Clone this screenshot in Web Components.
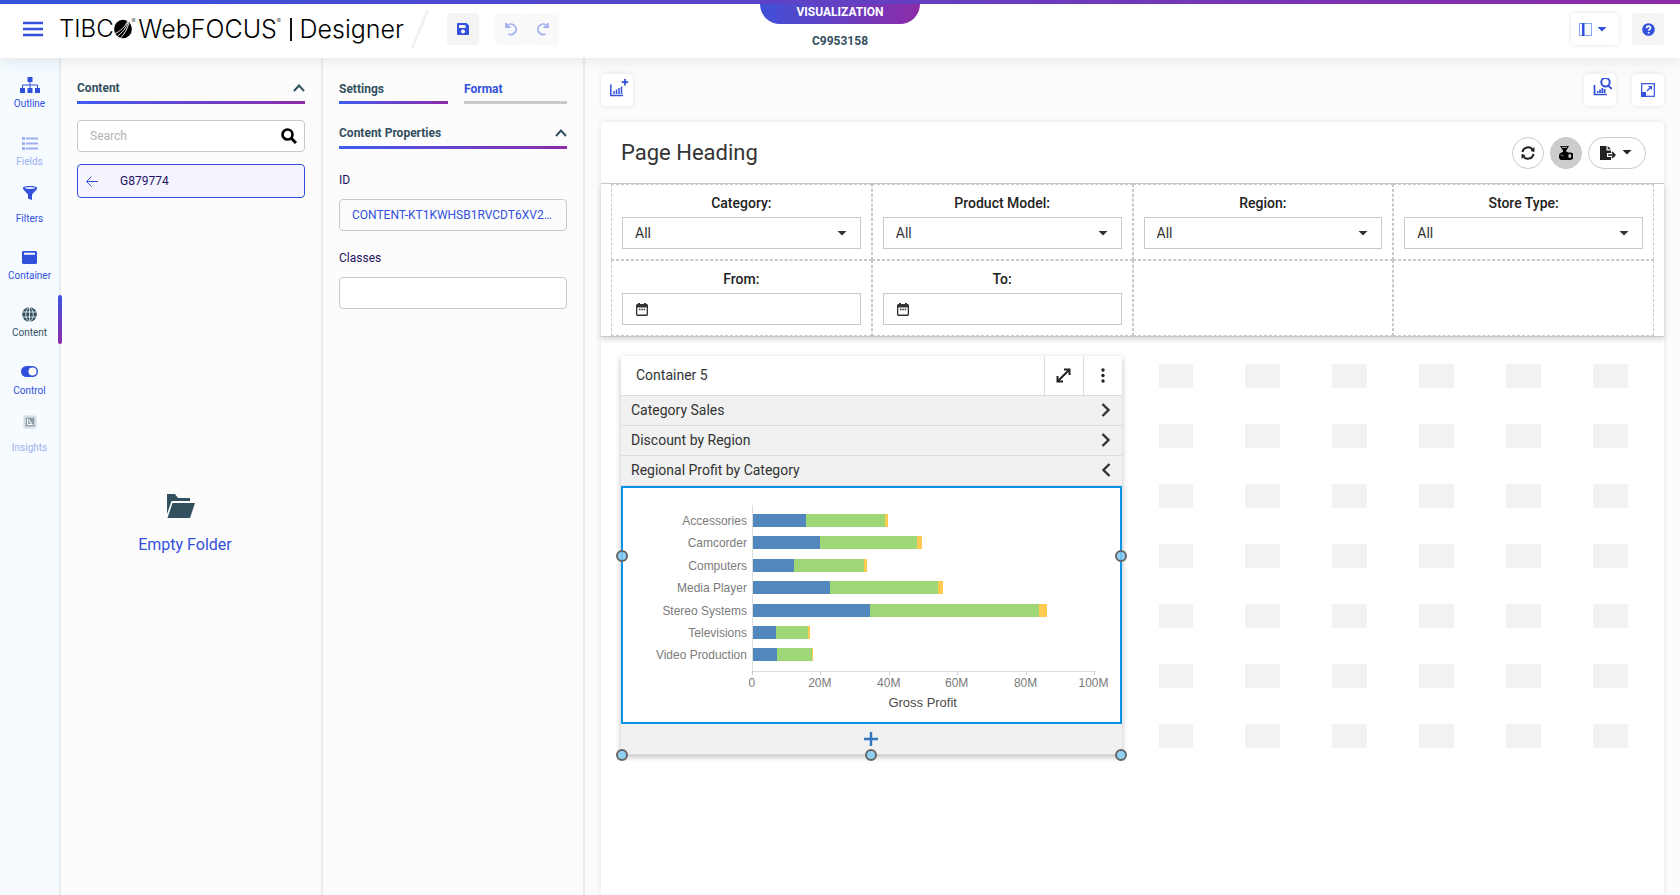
<!DOCTYPE html>
<html lang="en">
<head>
<meta charset="utf-8">
<title>WebFOCUS Designer</title>
<style>
html, body { margin: 0; height: 100%; }
body { font-family: Roboto, "Liberation Sans", sans-serif; font-size: 12px; background: #fcfcfc; color: #333; }
</style>
</head>
<body>
<designer-app></designer-app>

<script>
const BASE = `
  *, *::before, *::after { box-sizing: border-box; }
  button, input, select { font: inherit; color: inherit; margin: 0; }
  button { border: 0; background: none; padding: 0; display: flex; align-items: center; justify-content: center; cursor: pointer; }
  :host { display: block; box-sizing: border-box; }
`;

function define(name, css, html) {
  customElements.define(name, class extends HTMLElement {
    constructor() {
      super();
      this.attachShadow({ mode: 'open' });
    }
    connectedCallback() {
      if (this.shadowRoot.childNodes.length) return;
      const template = document.createElement('template');
      template.innerHTML = `<style>${BASE}${css}</style>${typeof html === 'function' ? html(this) : html}`;
      this.shadowRoot.append(template.content.cloneNode(true));
    }
  });
}

/* ---------- icons ---------- */
const ICONS = {
  menu: [20, 16, '<path d="M0 .7h20v2.600H0zM0 6.700h20v2.600H0zM0 12.700h20v2.600H0z" fill="currentColor"/>'],
  save: [12, 12, '<path fill="currentColor" fill-rule="evenodd" d="M1 0h8.500L12 2.500V11a1 1 0 0 1-1 1H1a1 1 0 0 1-1-1V1a1 1 0 0 1 1-1zM2 2v3h6.500V2zM6 6.500a2 2 0 1 0 .01 0z"/>'],
  undo: [14, 14, '<path d="M2 1V5H6.500M2.300 4.800A5.200 5.200 0 1 1 4.500 12" fill="none" stroke="currentColor" stroke-width="1.800"/>'],
  redo: [14, 14, '<path d="M12 1V5H7.500M11.700 4.800A5.200 5.200 0 1 0 9.500 12" fill="none" stroke="currentColor" stroke-width="1.800"/>'],
  layout: [13, 13, '<rect x=".5" y=".5" width="12" height="12" fill="#f3f8ff" stroke="#8aa8f0"/><path d="M3 0h2.500v13H3z" fill="#3250dc"/>'],
  caret: [10, 5, '<path d="M.5 0h9L5 4.500z" fill="currentColor"/>'],
  help: [13, 13, '<circle cx="6.500" cy="6.500" r="6.300" fill="currentColor"/><path d="M4.500 5.200c0-2.800 4-2.600 4-.3 0 1.400-1.900 1.400-1.900 2.900M6.600 9v1.600" stroke="#fff" stroke-width="1.600" fill="none"/>'],
  outline: [20, 16, '<path fill="currentColor" d="M7.500 0h5v5h-5zM0 11h5v5H0zM7.500 11h5v5h-5zM15 11h5v5h-5z"/><path d="M10 5v6M2.500 11V8h15v3" fill="none" stroke="currentColor"/>'],
  fields: [16, 14, '<path fill="currentColor" d="M0 1h3v3H0zM0 6h3v3H0zM0 11h3v3H0zM4 1.500h12v2H4zM4 6.500h12v2H4zM4 11.500h12v2H4z"/>'],
  filter: [14, 14, '<path fill="currentColor" d="M0 2c0-2.600 14-2.600 14 0v1L9 8.500V14L5 12.500V8.500L0 3z"/><ellipse cx="7" cy="2" rx="5" ry=".9" fill="#dfe9fd"/>'],
  container: [15, 13, '<path fill="currentColor" fill-rule="evenodd" d="M1 0h13l1 1v11l-1 1H1l-1-1V1zM2 1.800v2h11v-2z"/>'],
  globe: [15, 15, '<circle cx="7.500" cy="7.500" r="7.300" fill="currentColor"/><path d="M0 5h15M0 10h15M7.500 0v15M7.500 0C2.500 3 2.500 12 7.500 15M7.500 0C12.500 3 12.500 12 7.500 15" stroke="#f5fbff" stroke-width=".8" fill="none"/>'],
  toggle: [17, 11, '<rect width="17" height="11" rx="5.500" fill="currentColor"/><circle cx="11.500" cy="5.500" r="4" fill="#fff"/>'],
  insights: [14, 14, '<rect x="1" y="1" width="12" height="12" rx="2" fill="#c4d0d6" stroke="#dbe4e9" stroke-width="2" stroke-dasharray="1.500 .7"/><rect x="3" y="3" width="8" height="8" fill="#8b9ea7"/><path d="M4.500 4v5.500H10M5 4.500l2 1.500v2h2" stroke="#fff" fill="none"/>'],
  up: [12, 8, '<path d="M1 7l5-5.500L11 7" fill="none" stroke="currentColor" stroke-width="2"/>'],
  search: [16, 16, '<circle cx="6.500" cy="6.500" r="5" fill="none" stroke="currentColor" stroke-width="2.600"/><path d="M10 10l5 5" stroke="currentColor" stroke-width="3"/>'],
  back: [12, 11, '<path d="M12 5.500H1M5.500.5l-5 5 5 5" fill="none" stroke="currentColor"/>'],
  folder: [28, 24, '<path fill="currentColor" d="M0 0h8l3 4h12v3H4.500L0 20zM5.500 9H28l-5 15H.5z"/>'],
  chartAdd: [24, 24, '<path d="M5.800 6.500v11H18M9 16v-3M11.500 16v-4.500M14 16v-6M16.500 16V8.500" fill="none" stroke="currentColor" stroke-width="1.500"/><path d="M20 1v6.500M16.700 4.200h6.500" stroke="currentColor" stroke-width="1.800"/>'],
  chartFind: [24, 24, '<path d="M6.500 7v9.500H19M9.700 15v-2M12 15v-3.500M14.300 15v-5M16.600 15v-4M20 7.500l4 3.500" fill="none" stroke="currentColor" stroke-width="1.700"/><circle cx="17.500" cy="4.300" r="4.200" fill="#fff" stroke="currentColor" stroke-width="2"/>'],
  expand: [14, 14, '<rect x=".7" y=".7" width="12.600" height="12.600" fill="none" stroke="currentColor" stroke-width="1.200"/><path d="M0 9h5v5H0zM7 3h4v4z" fill="currentColor"/><path d="M10 4L6 8" stroke="currentColor" stroke-width="1.500"/>'],
  refresh: [14, 14, '<path d="M1.500 6A5.600 5.600 0 0 1 11.800 4M12.500 8A5.600 5.600 0 0 1 2.200 10" fill="none" stroke="currentColor" stroke-width="2"/><path d="M13.500 1v5L9.500 5zM.5 13V8l4 1z" fill="currentColor"/>'],
  flask: [14, 14, '<path d="M1 0h9L7.300 4.500v2H4V4.500z" fill="currentColor"/><path d="M3 1.300h5" stroke="#ccc" stroke-width=".9"/><path d="M.8 7.500l3-1.700h4l1.200.7h2a3.700 3.700 0 0 1 0 7.500H2.500C-.3 14-.7 9.500.8 7.500z" fill="currentColor"/><ellipse cx="10.800" cy="10" rx="1.500" ry="1.900" fill="#ccc"/><path d="M1.500 8.800l3 1" stroke="#ccc" stroke-width=".6"/>'],
  exportFile: [16, 14, '<path d="M0 0h6.500v4.500H11V7H7v4h4v3H0z" fill="currentColor"/><path d="M7.700 0L11 3.300H7.700z" fill="currentColor"/><path d="M8 9h6M12 6.200l2.800 2.800L12 11.800" fill="none" stroke="currentColor" stroke-width="1.700"/>'],
  calendar: [12, 13, '<path fill="currentColor" fill-rule="evenodd" d="M1 1h1V0h2v1h4V0h2v1h1l1 1v10l-1 1H1l-1-1V2zM1.300 4.500v7h9.400v-7z"/><path d="M3 6.500h1.500M5.300 6.500h1.500M7.600 6.500h1.500" stroke="currentColor" stroke-width="1.300"/>'],
  resize: [15, 15, '<path d="M3 12l9-9" stroke="currentColor" stroke-width="2"/><path d="M8 .5h6.500V7h-2V4l-1.500-1.500H8zM.5 8v6.500H7v-2H4L2.500 11V8z" fill="currentColor"/>'],
  dots: [4, 15, '<circle cx="2" cy="2" r="1.700" fill="currentColor"/><circle cx="2" cy="7.500" r="1.700" fill="currentColor"/><circle cx="2" cy="13" r="1.700" fill="currentColor"/>'],
  right: [10, 14, '<path d="M1.500 1l6 6-6 6" fill="none" stroke="currentColor" stroke-width="2.400"/>'],
  left: [10, 14, '<path d="M8.500 1l-6 6 6 6" fill="none" stroke="currentColor" stroke-width="2.400"/>'],
  plus: [14, 14, '<path d="M7 0v14M0 7h14" stroke="currentColor" stroke-width="2.400"/>'],
  ball: [18, 20, '<ellipse cx="9" cy="10" rx="8.900" ry="9.200" fill="#000"/><path d="M1 14.500C6 12.500 11 8 13.500 2M3.500 17C8 14 12.500 9 14.300 2.500M6.500 19C10.500 15 13.500 10 15 3.500" stroke="#fff" stroke-width=".9" fill="none"/>']
};
define('ui-icon', ':host{display:inline-flex;flex:none} svg{display:block}', el => {
  const [w, h, body] = ICONS[el.getAttribute('name')];
  return `<svg width="${w}" height="${h}" viewBox="0 0 ${w} ${h}" aria-hidden="true">${body}</svg>`;
});

/* ---------- header ---------- */
define('icon-button', `
  :host { flex: none; }
  button { width: 32px; height: 32px; border-radius: 4px; color: #3250dc; background: #f4f4f4; }
  :host([kind="raised"]) button { background: #fff; box-shadow: 0 0 5px rgba(0,0,0,.1); }
  :host([kind="faded"]) button { background: #f9f9f9; color: #a3b1f1; }
  :host([wide]) button { width: 48px; gap: 5px; padding-right: 4px; }
`, el => `<button type="button" aria-label="${el.getAttribute('label')}"><slot></slot></button>`);

define('product-logo', `
  :host { font: 300 24px/32px Inter, "Open Sans", sans-serif; color: #000; width: 345px; flex: none; }
  h1 { font: inherit; margin: 0; display: flex; align-items: center; white-space: nowrap; height: 30px; }
  sup { font-size: 6px; line-height: 8px; align-self: flex-start; margin-top: 3px; width: 7px; }
  .name { font-size: 25px; }
  .bar { width: 2px; height: 23px; background: #111; margin: 0 8px 0 6px; }
`, `<h1><span>TIBC</span><ui-icon name="ball"></ui-icon><sup>®</sup><span class="name">WebFOCUS</span><sup>®</sup><span class="bar"></span><span class="name">Designer</span></h1>`);

define('app-header', `
  :host { position: relative; z-index: 2; background: #fff; height: 58px; box-shadow: 0 0 16px rgba(50,80,100,.16); flex: none; }
  .strip { height: 4px; background: linear-gradient(90deg, #3355de, #8e2ba8); }
  .row { display: grid; grid-template-columns: 1fr auto 1fr; align-items: start; }
  .left, .right { display: flex; align-items: center; padding-top: 9px; }
  .left { padding-left: 23px; height: 41px; }
  .menu { color: #3250dc; margin-right: 16px; }
  .slash { margin: 0 18px 0 7px; display: block; flex: none; }
  .history { display: flex; margin-left: 16px; }
  .center { display: flex; flex-direction: column; align-items: center; }
  .pill { width: 160px; height: 20px; border-radius: 0 0 24px 24px; background: linear-gradient(100deg, #3f51d8, #8e2ba8); color: #fff; font-weight: 700; line-height: 16px; text-align: center; }
  .id { font-weight: 700; color: #33505f; line-height: 16px; margin-top: 9px; }
  .right { justify-content: flex-end; gap: 13px; padding-right: 16px; }
`, `
  <div class="strip"></div>
  <div class="row">
    <div class="left">
      <button class="menu" aria-label="Menu"><ui-icon name="menu"></ui-icon></button>
      <product-logo></product-logo>
      <svg class="slash" width="18" height="38" viewBox="0 0 18 38"><path d="M17 0L1 38" stroke="#f0f0f0" stroke-width="2.500"/></svg>
      <icon-button label="Save"><ui-icon name="save"></ui-icon></icon-button>
      <div class="history">
        <icon-button kind="faded" label="Undo"><ui-icon name="undo"></ui-icon></icon-button>
        <icon-button kind="faded" label="Redo"><ui-icon name="redo"></ui-icon></icon-button>
      </div>
    </div>
    <div class="center"><div class="pill">VISUALIZATION</div><div class="id">C9953158</div></div>
    <div class="right">
      <icon-button kind="raised" wide label="Layout"><ui-icon name="layout"></ui-icon><ui-icon name="caret"></ui-icon></icon-button>
      <icon-button label="Help"><ui-icon name="help"></ui-icon></icon-button>
    </div>
  </div>`);

/* ---------- sidebar ---------- */
define('nav-item', `
  :host { position: relative; }
  button { width: 100%; height: 100%; flex-direction: column; justify-content: flex-end; gap: 4px; padding-bottom: 8px; font-size: 10px; line-height: 14px; color: #3250dc; }
  .icon { height: 16px; display: flex; align-items: center; }
  :host([tall]) button { gap: 11px; }
  :host([off]) button { color: #9fb0f0; }
  :host([active]) button { color: #33505f; }
  :host([active])::after { content: ""; position: absolute; top: 4px; bottom: 4px; right: -3px; width: 4px; border-radius: 2px; background: linear-gradient(#3f55dc, #8e2ba8); }
`, el => `<button type="button"><span class="icon"><ui-icon name="${el.getAttribute('icon')}"></ui-icon></span><slot></slot></button>`);

define('side-nav', `
  :host { width: 61px; flex: none; background: #f5fbff; border-right: 2px solid #ebebeb; padding-top: 4px; }
  nav { display: grid; grid-template-rows: repeat(7, 1fr); height: 401px; }
`, `<nav>
  <nav-item icon="outline">Outline</nav-item>
  <nav-item icon="fields" off>Fields</nav-item>
  <nav-item icon="filter" tall>Filters</nav-item>
  <nav-item icon="container">Container</nav-item>
  <nav-item icon="globe" active>Content</nav-item>
  <nav-item icon="toggle">Control</nav-item>
  <nav-item icon="insights" tall off>Insights</nav-item>
</nav>`);

/* ---------- panels ---------- */
define('panel-title', `
  :host { color: #33505f; font-weight: 700; }
  button { width: 100%; justify-content: space-between; font-weight: 700; line-height: 16px; height: 24px; padding-bottom: 4px; border-bottom: 3px solid; border-image: linear-gradient(90deg, #3f5cf0, #8e2ba8) 1; }
  :host([fold]) button { padding-bottom: 6px; }
  :host([plain]) button { color: #3250dc; border-image: none; border-color: #c9c9c9; }
`, el => `<button type="button"><slot></slot>${el.hasAttribute('fold') ? '<ui-icon name="up"></ui-icon>' : ''}</button>`);

define('content-panel', `
  :host { width: 262px; flex: none; border-right: 2px solid #ebebeb; padding: 22px 16px 0; display: flex; flex-direction: column; }
  .search { display: flex; align-items: center; height: 32px; margin-top: 16px; padding: 0 7px 0 12px; border: 1px solid #c9c9c9; border-radius: 4px; background: #fff; color: #000; }
  .search input { flex: 1; min-width: 0; border: 0; outline: 0; background: none; padding: 0; }
  input::placeholder { color: #b3b3b3; opacity: 1; }
  .crumb { width: 100%; height: 34px; margin-top: 12px; padding: 0 8px; gap: 22px; justify-content: flex-start; background: #f4f3fe; border: 1px solid #3250dc; border-radius: 4px; color: #3250dc; }
  .crumb span { color: #24125f; }
  .empty { display: flex; flex-direction: column; align-items: center; margin: 296px 12px 0 0; color: #33505f; gap: 16px; }
  .empty ui-icon { margin-right: 8px; }
  p { margin: 0; font-size: 16px; line-height: 22px; color: #3250dc; }
`, `
  <panel-title fold>Content</panel-title>
  <label class="search"><input type="text" placeholder="Search" aria-label="Search"><ui-icon name="search"></ui-icon></label>
  <button class="crumb" type="button"><ui-icon name="back"></ui-icon><span>G879774</span></button>
  <div class="empty"><ui-icon name="folder"></ui-icon><p>Empty Folder</p></div>`);

define('text-field', `
  label { display: block; color: #24125f; line-height: 16px; }
  input { display: block; width: 100%; height: 32px; margin-top: 11px; padding: 0 12px; border: 1px solid #c9c9c9; border-radius: 4px; background: #fff; color: #3250dc; text-overflow: ellipsis; outline: 0; }
  input:read-only { background: #fcfcfc; }
`, el => `<label>${el.getAttribute('label')}<input type="text" value="${el.getAttribute('value') || ''}" ${el.hasAttribute('locked') ? 'readonly' : ''}></label>`);

define('settings-panel', `
  :host { width: 262px; flex: none; border-right: 2px solid #ebebeb; padding: 22px 16px 0; }
  .tabs { display: grid; grid-template-columns: 1fr 103px; gap: 16px; margin-bottom: 21px; }
  text-field { margin-top: 23px; }
  text-field + text-field { margin-top: 19px; }
`, `
  <div class="tabs"><panel-title>Settings</panel-title><panel-title plain>Format</panel-title></div>
  <panel-title fold>Content Properties</panel-title>
  <text-field label="ID" value="CONTENT-KT1KWHSB1RVCDT6XV2P4" locked></text-field>
  <text-field label="Classes"></text-field>`);

/* ---------- page filters ---------- */
define('filter-cell', `
  :host { border: 1px dashed #c9c9c9; height: 76px; padding: 9px 10px 0; }
  label { display: block; text-align: center; font-size: 14px; line-height: 18px; font-weight: 500; color: #222; }
  .box { position: relative; display: flex; align-items: center; height: 32px; margin-top: 5px; border: 1px solid #c9c9c9; background: #fff; }
  select, input { appearance: none; width: 100%; height: 100%; border: 0; border-radius: 0; background: none; padding: 0 12px; font-size: 14px; outline: 0; color: #333; }
  .box > ui-icon { position: absolute; pointer-events: none; }
  .box > ui-icon[name="caret"] { right: 13px; }
  .box > ui-icon[name="calendar"] { left: 13px; }
  input { padding-left: 34px; }
`, el => {
  const label = el.getAttribute('label');
  if (!label) return '';
  const box = el.hasAttribute('date')
    ? '<input id="f" type="text"><ui-icon name="calendar"></ui-icon>'
    : '<select id="f"><option>All</option></select><ui-icon name="caret"></ui-icon>';
  return `<label for="f">${label}</label><div class="box">${box}</div>`;
});

define('page-filters', `
  :host { display: grid; grid-template-columns: repeat(4, 1fr); padding: 0 10px; border-top: 1px solid #c9c9c9; border-bottom: 1px solid #c9c9c9; box-shadow: 0 3px 5px rgba(0,0,0,.15); position: relative; background: #fff; }
`, `
  <filter-cell label="Category:"></filter-cell>
  <filter-cell label="Product Model:"></filter-cell>
  <filter-cell label="Region:"></filter-cell>
  <filter-cell label="Store Type:"></filter-cell>
  <filter-cell label="From:" date></filter-cell>
  <filter-cell label="To:" date></filter-cell>
  <filter-cell></filter-cell>
  <filter-cell></filter-cell>`);

define('page-heading', `
  :host { display: flex; align-items: center; height: 61px; padding: 0 18px 0 20px; }
  h2 { flex: 1; margin: 0; font-size: 22px; line-height: 28px; font-weight: 400; color: #333; }
  .tools { display: flex; gap: 6px; }
  button { width: 32px; height: 32px; border-radius: 16px; border: 1px solid #c9c9c9; background: #fff; color: #222; }
  .on { background: #ccc; color: #000; }
  .export { width: 58px; gap: 6px; padding-right: 2px; }
`, `
  <h2><slot></slot></h2>
  <div class="tools">
    <button aria-label="Refresh"><ui-icon name="refresh"></ui-icon></button>
    <button class="on" aria-label="Sample data"><ui-icon name="flask"></ui-icon></button>
    <button class="export" aria-label="Export"><ui-icon name="exportFile"></ui-icon><ui-icon name="caret"></ui-icon></button>
  </div>`);

/* ---------- chart ---------- */
const ROWS = [
  ['Accessories', 53, 79, 3], ['Camcorder', 67, 97, 5], ['Computers', 41, 70, 3],
  ['Media Player', 77, 108, 5], ['Stereo Systems', 117, 169, 8], ['Televisions', 23, 32, 2], ['Video Production', 24, 35, 1]
];
define('profit-chart', `
  svg { display: block; width: 100%; font: 12px "Liberation Sans", Arial, sans-serif; fill: #7b7b7b; }
`, () => {
  const X = 130, colours = ['#5287be', '#9fd676', '#ffca52'];
  let out = '';
  ROWS.forEach(([name, ...parts], i) => {
    const y = 26 + Math.round(i * 22.4);
    out += `<text x="${X - 6}" y="${y + 11}" text-anchor="end">${name}</text>`;
    let x = X;
    parts.forEach((w, k) => { out += `<rect x="${x}" y="${y}" width="${w}" height="13" fill="${colours[k]}"/>`; x += w; });
  });
  for (let i = 0; i <= 5; i++) {
    const x = 129 + Math.round(i * 68.4);
    out += `<rect x="${x}" y="183" width="1" height="4" fill="#ccc"/><text x="${x}" y="199" text-anchor="middle">${i ? i * 20 + 'M' : 0}</text>`;
  }
  return `<svg viewBox="0 0 497 234" role="img" aria-label="Gross profit by category" shape-rendering="crispEdges">
    <path d="M129 17h1v166h342v1H129z" fill="#dcdcdc"/>${out}
    <text x="300" y="219" text-anchor="middle" font-size="13" fill="#4a4a4a">Gross Profit</text></svg>`;
});

/* ---------- container ---------- */
define('accordion-row', `
  button { width: 100%; height: 30px; justify-content: space-between; padding: 0 11px 2px 10px; background: #f1f1f1; border-bottom: 1px solid #dcdcdc; font-size: 14px; color: #333; }
`, el => `<button type="button"><slot></slot><ui-icon name="${el.hasAttribute('open') ? 'left' : 'right'}"></ui-icon></button>`);

define('drag-handle', `
  :host { position: absolute; width: 12px; height: 12px; border-radius: 50%; border: 2px solid #666; background: rgba(128,203,245,.85); transform: translate(-50%, -50%); }
`, '');

define('chart-container', `
  :host { position: relative; background: #f1f1f1; box-shadow: 0 2px 6px rgba(0,0,0,.25); }
  header { display: flex; height: 40px; background: #fff; border-bottom: 1px solid #dcdcdc; }
  h3 { flex: 1; margin: 0; padding-left: 15px; font-size: 14px; line-height: 39px; font-weight: 400; }
  header button { width: 39px; border-left: 1px solid #dcdcdc; color: #222; }
  .selected { position: relative; border: 2px solid #0c95e6; background: #fff; }
  .add { width: 100%; height: 31px; color: #2f77bf; border-bottom: 1px solid #dcdcdc; }
  .l { left: 1px; } .m { left: 50%; } .r { left: calc(100% - 1px); }
  .bottom { top: 100%; }
  .selected .l { left: -1px; } .selected .r { left: calc(100% + 1px); } .mid { top: 68px; }
`, `
  <header><h3>Container 5</h3>
    <button aria-label="Expand"><ui-icon name="resize"></ui-icon></button>
    <button aria-label="More"><ui-icon name="dots"></ui-icon></button></header>
  <accordion-row>Category Sales</accordion-row>
  <accordion-row>Discount by Region</accordion-row>
  <accordion-row open>Regional Profit by Category</accordion-row>
  <div class="selected"><profit-chart></profit-chart>
    <drag-handle class="l mid"></drag-handle><drag-handle class="r mid"></drag-handle></div>
  <button class="add" aria-label="Add"><ui-icon name="plus"></ui-icon></button>
  <drag-handle class="l bottom"></drag-handle><drag-handle class="m bottom"></drag-handle><drag-handle class="r bottom"></drag-handle>`);

define('drop-grid', `
  :host { display: grid; grid-template-columns: repeat(6, 1fr); grid-auto-rows: 60px; place-items: center; }
  span { width: 40%; height: 24px; background: #f2f2f2; }
`, () => '<span></span>'.repeat(42));

define('design-canvas', `
  :host { flex: 1; min-width: 0; display: flex; flex-direction: column; padding: 16px 16px 0; }
  .bar { display: flex; gap: 16px; margin-bottom: 16px; }
  .bar > :first-child { margin-right: auto; }
  .page { flex: 1; background: #fff; border-radius: 4px 4px 0 0; box-shadow: 0 0 6px rgba(0,0,0,.1); }
  .body { display: grid; grid-template-columns: 1fr 1fr; padding: 9px 10px 40px; align-items: start; }
  chart-container { margin: 10px 11px 10px 10px; }
`, `
  <div class="bar">
    <icon-button kind="raised" label="Add content"><ui-icon name="chartAdd"></ui-icon></icon-button>
    <icon-button kind="raised" label="Find content"><ui-icon name="chartFind"></ui-icon></icon-button>
    <icon-button kind="raised" label="Full screen"><ui-icon name="expand"></ui-icon></icon-button>
  </div>
  <div class="page">
    <page-heading>Page Heading</page-heading>
    <page-filters></page-filters>
    <div class="body"><chart-container></chart-container><drop-grid></drop-grid></div>
  </div>`);

define('designer-app', `
  :host { min-height: 100%; display: flex; flex-direction: column; }
  main { flex: 1; display: flex; }
`, `<app-header></app-header>
  <main><side-nav></side-nav><content-panel></content-panel><settings-panel></settings-panel><design-canvas></design-canvas></main>`);
</script>
</body>
</html>
